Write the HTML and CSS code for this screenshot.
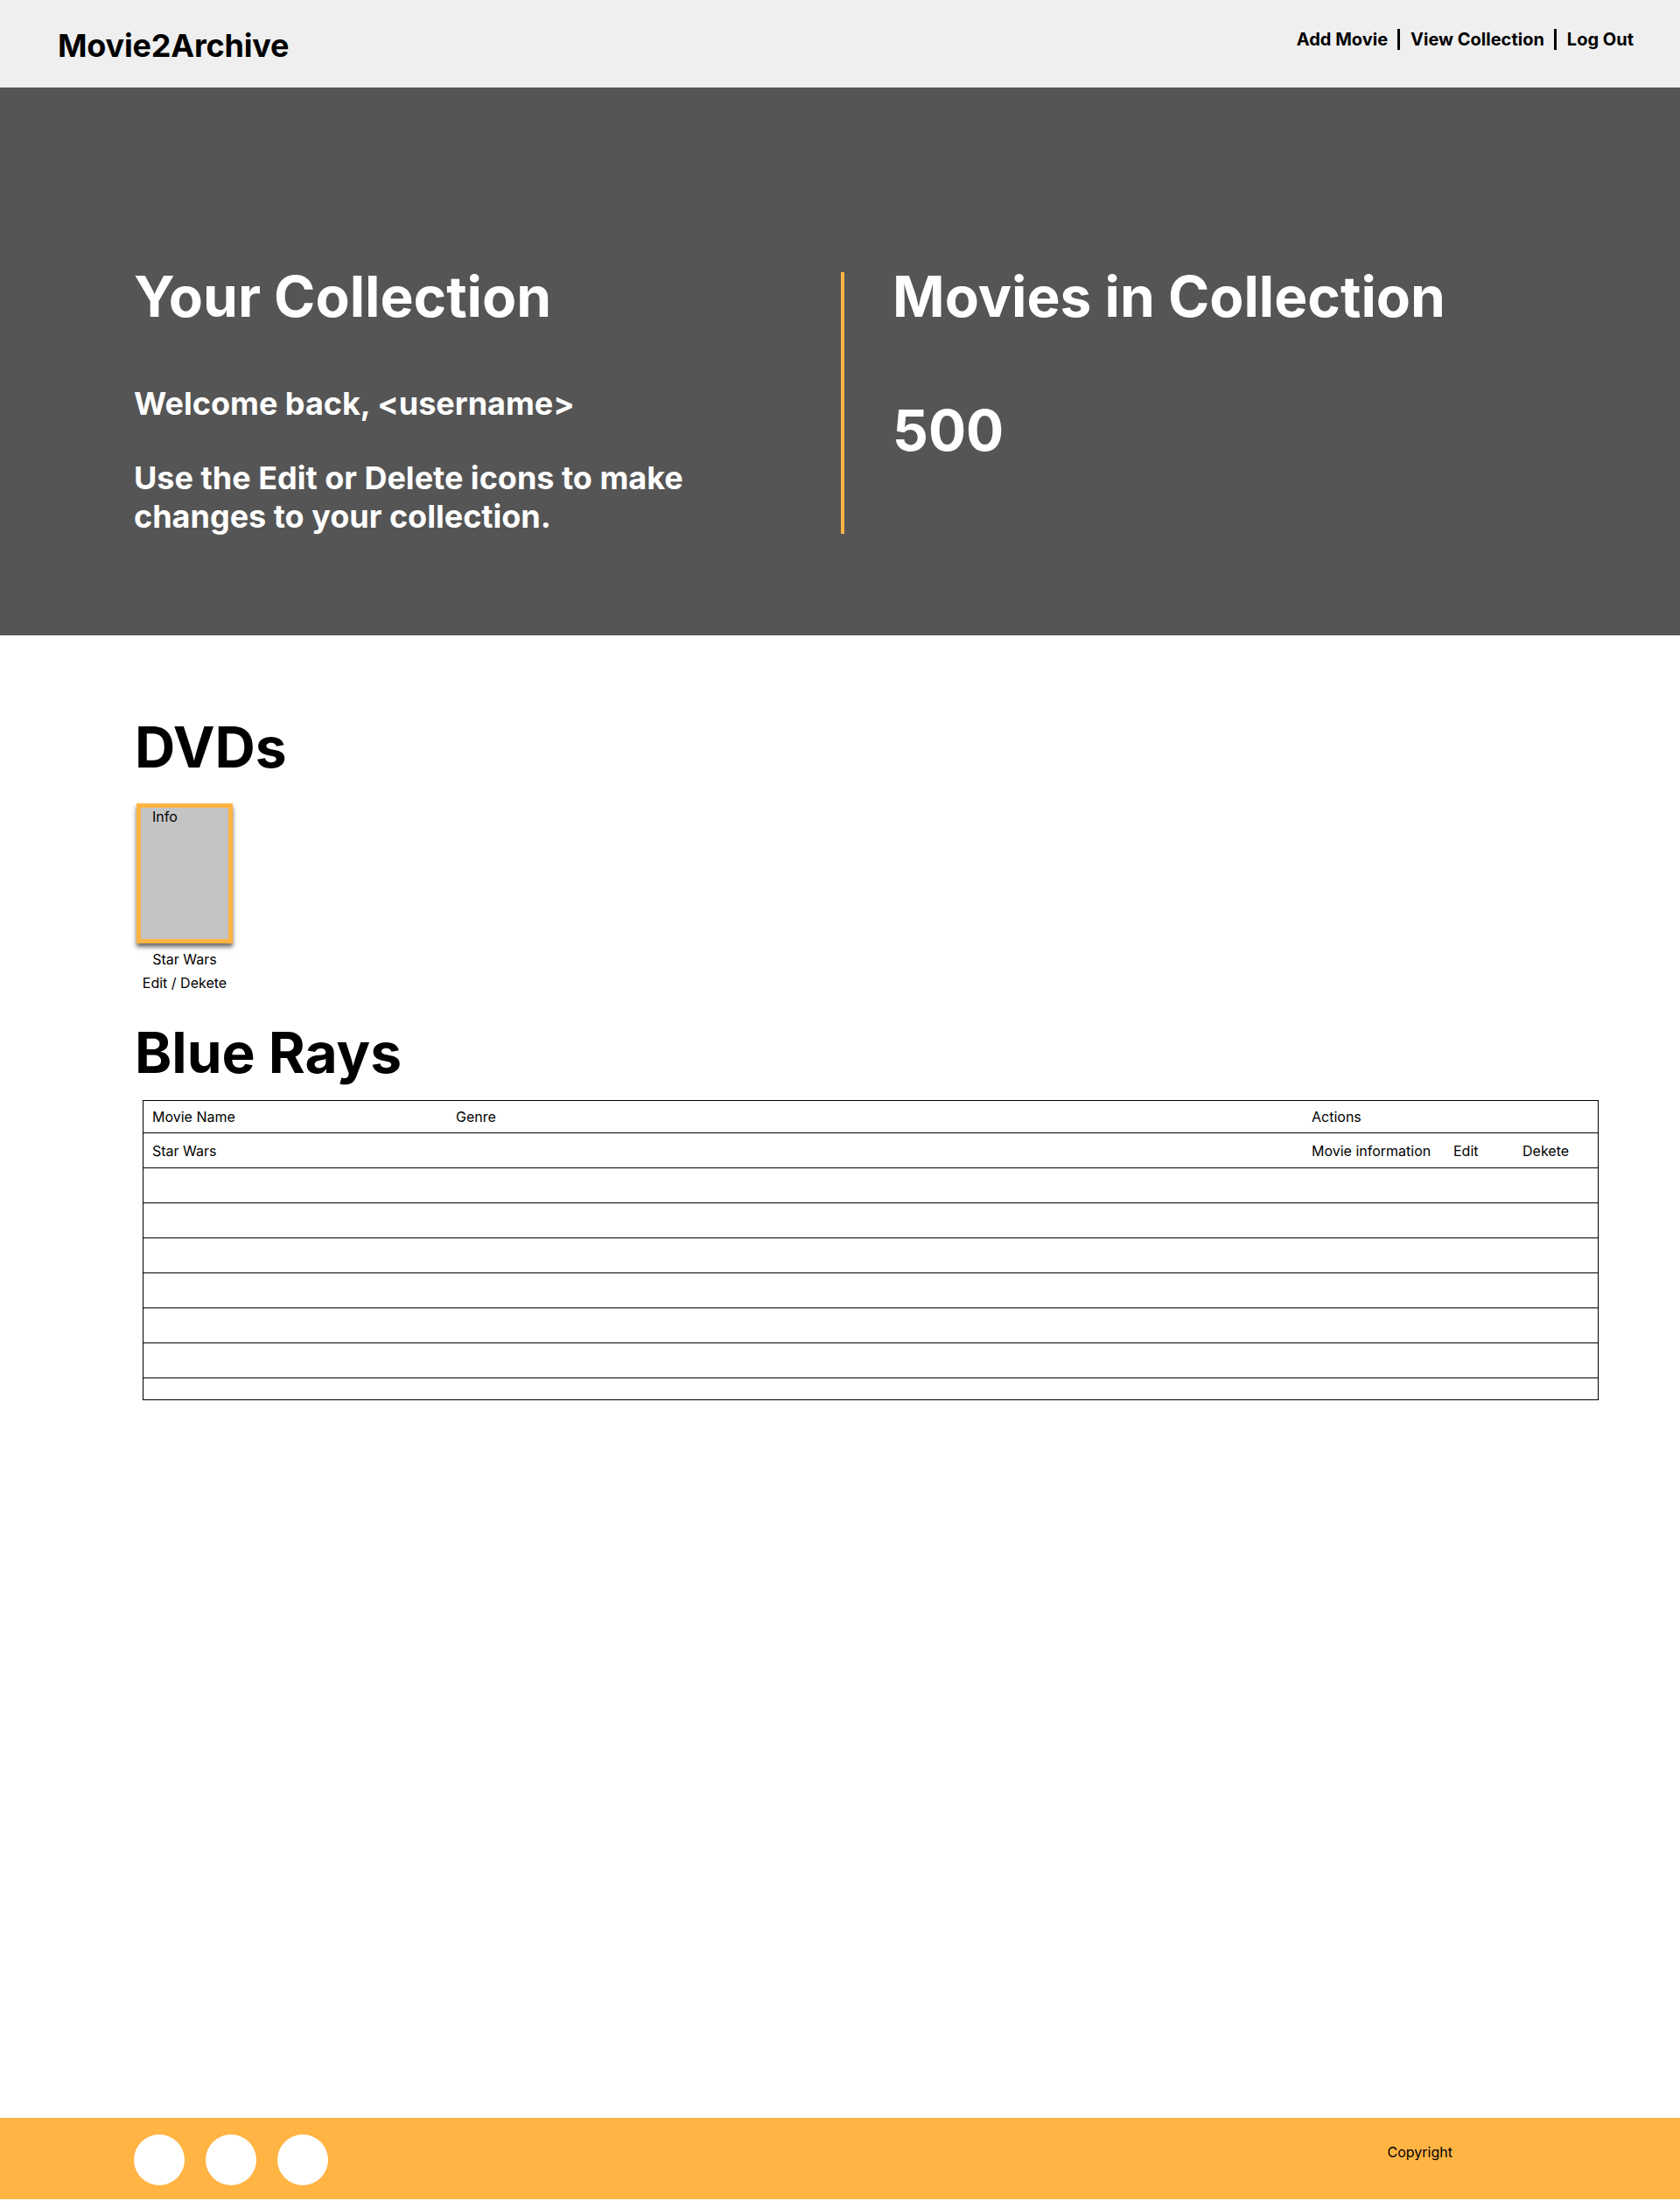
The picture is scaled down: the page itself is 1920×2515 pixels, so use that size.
FILE: index.html
```html
<!DOCTYPE html>
<html lang="en">
<head>
<meta charset="utf-8">
<title>Movie2Archive - Your Collection</title>
<link rel="stylesheet" href="styles.css">
</head>
<body>
<header class="site-header">
  <div class="logo">Movie2Archive</div>
  <nav class="nav">
    <a href="#">Add Movie</a>
    <a href="#">View Collection</a>
    <a href="#">Log Out</a>
  </nav>
</header>

<section class="hero">
  <div class="hero-left">
    <h1 class="hero-title">Your Collection</h1>
    <p class="hero-text welcome">Welcome back, &lt;username&gt;</p>
    <p class="hero-text hint">Use the Edit or Delete icons to make changes to your collection.</p>
  </div>
  <div class="hero-divider"></div>
  <div class="hero-right">
    <h2 class="hero-title">Movies in Collection</h2>
    <div class="hero-count">500</div>
  </div>
</section>

<main class="content">
  <h2 class="section-title">DVDs</h2>
  <div class="dvd-list">
    <div class="dvd">
      <div class="dvd-cover"><span class="dvd-info">Info</span></div>
      <div class="dvd-caption dvd-name">Star Wars</div>
      <div class="dvd-caption">Edit / Dekete</div>
    </div>
  </div>

  <h2 class="section-title blue">Blue Rays</h2>
  <div class="table">
    <div class="row head">
      <div class="cell">Movie Name</div>
      <div class="cell">Genre</div>
      <div class="cell actions">Actions</div>
    </div>
    <div class="row">
      <div class="cell">Star Wars</div>
      <div class="cell"></div>
      <div class="cell">Movie information</div>
      <div class="cell">Edit</div>
      <div class="cell">Dekete</div>
    </div>
    <div class="row"></div>
    <div class="row"></div>
    <div class="row"></div>
    <div class="row"></div>
    <div class="row"></div>
    <div class="row"></div>
    <div class="row last"></div>
  </div>
</main>

<footer class="site-footer">
  <div class="socials">
    <span class="social"></span>
    <span class="social"></span>
    <span class="social"></span>
  </div>
  <div class="copyright">Copyright</div>
</footer>
</body>
</html>
```
FILE: styles.css
```css
* { box-sizing: border-box; }

html, body {
  margin: 0;
  padding: 0;
}

body {
  font-family: Inter, "Noto Sans", "Liberation Sans", sans-serif;
  color: #000;
  background: #fff;
  min-height: 100vh;
  display: flex;
  flex-direction: column;
}

/* Header */
.site-header {
  height: 100px;
  background: #efefef;
  display: flex;
  justify-content: space-between;
  align-items: flex-start;
  padding: 0 53px 0 66px;
}

.logo {
  font-size: 36px;
  font-weight: 700;
  line-height: 44px;
  margin-top: 30px;
  letter-spacing: -0.2px;
}

.nav {
  display: flex;
  margin-top: 33px;
}

.nav a {
  color: #000;
  text-decoration: none;
  font-size: 20px;
  font-weight: 700;
  line-height: 24px;
}

.nav a + a {
  border-left: 3px solid #000;
  margin-left: 11px;
  padding-left: 12px;
}

/* Hero */
.hero {
  background: #555555;
  color: #fff;
  display: flex;
  padding: 200px 0 114px 153px;
}

.hero-left {
  width: 808px;
}

.hero-title {
  margin: 0;
  font-size: 64px;
  font-weight: 700;
  line-height: 77px;
}

.hero-text {
  margin: 0;
  font-size: 36px;
  font-weight: 700;
  line-height: 44px;
}

.welcome { margin-top: 62px; }

.hint {
  margin-top: 41px;
  max-width: 680px;
}

.hero-divider {
  width: 4px;
  background: #ffb443;
  margin: 11px 0 2px;
}

.hero-right {
  padding-left: 55px;
}

.hero-count {
  margin-top: 76px;
  font-size: 64px;
  font-weight: 700;
  line-height: 77px;
}

/* Content */
.content {
  flex: 1;
  padding: 89px 93px 0 154px;
}

.section-title {
  margin: 0;
  font-size: 64px;
  font-weight: 700;
  line-height: 77px;
}

.dvd-list {
  display: flex;
  margin-top: 26px;
  padding-left: 2px;
}

.dvd {
  width: 110px;
  display: flex;
  flex-direction: column;
  align-items: center;
}

.dvd-cover {
  width: 110px;
  height: 160px;
  background: #c4c4c4;
  border: 5px solid #ffb443;
  box-shadow: 0 4px 5px rgba(0, 0, 0, 0.6);
  padding-left: 13px;
  align-self: stretch;
}

.dvd-info {
  display: block;
  font-size: 16px;
  line-height: 20px;
}

.dvd-caption {
  font-size: 16px;
  line-height: 27px;
  white-space: nowrap;
}

.dvd-name { margin-top: 5px; }

.section-title.blue { margin-top: 27px; }

/* Table */
.table {
  margin: 16px 0 0 9px;
  border: 1px solid #000;
}

.row {
  display: grid;
  grid-template-columns: 347px 978px 162px 79px 1fr;
  align-items: center;
  height: 40px;
  padding-left: 10px;
  border-bottom: 1px solid #000;
  font-size: 16px;
}

.row.head { height: 37px; }

.row.last {
  height: 24px;
  border-bottom: 0;
}

.cell { white-space: nowrap; }

.cell.actions { grid-column: 3 / 6; }

/* Footer */
.site-footer {
  height: 93px;
  margin-bottom: 2px;
  background: #ffb443;
  display: flex;
  justify-content: space-between;
  align-items: flex-start;
  padding: 0 260px 0 153px;
}

.socials {
  display: flex;
  gap: 24px;
  margin-top: 19px;
}

.social {
  width: 58px;
  height: 58px;
  border-radius: 50%;
  background: #fff;
}

.copyright {
  margin-top: 30px;
  font-size: 16px;
  line-height: 19px;
}
```
